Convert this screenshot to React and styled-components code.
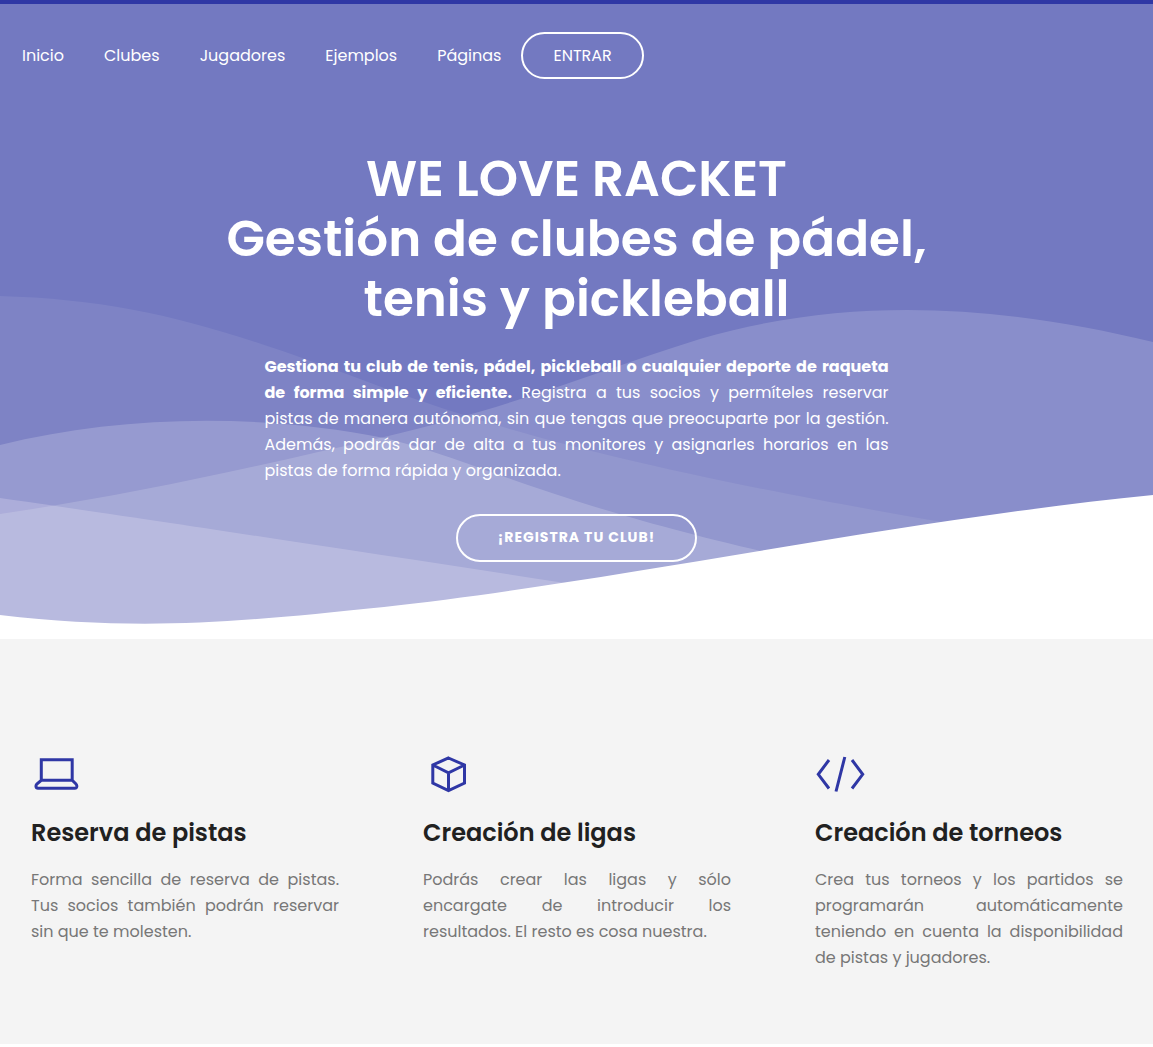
import React from "react";
import styled, { createGlobalStyle } from "styled-components";

const GlobalStyle = createGlobalStyle`
  *, *::before, *::after { box-sizing: border-box; }
  body {
    margin: 0;
    background: #ffffff;
    color: #777777;
    font-family: Poppins, Inter, "Open Sans", sans-serif;
    font-size: 16px;
    line-height: 26px;
  }
  h1, h2, p, ul { margin: 0; padding: 0; }
`;

const Hero = styled.header`
  position: relative;
  border-top: 4px solid #2f37a5;
  background: #7379c1;
  color: #ffffff;
  padding: 28px 0 77px;
`;

const Waves = styled.svg`
  position: absolute;
  inset: 0;
  width: 100%;
  height: 100%;
  display: block;
`;

const Nav = styled.nav`
  position: relative;
  display: flex;
  align-items: center;
  padding-left: 2px;
`;

const NavList = styled.ul`
  display: flex;
  list-style: none;
`;

const NavLink = styled.a`
  display: block;
  padding: 0 20px;
  color: inherit;
  text-decoration: none;
`;

const OutlineLink = styled.a`
  display: inline-block;
  border: 2px solid #ffffff;
  border-radius: 24px;
  color: #ffffff;
  text-decoration: none;
  text-transform: uppercase;
`;

const LoginLink = styled(OutlineLink)`
  padding: 9px 30px 8px;
`;

const RegisterLink = styled(OutlineLink)`
  margin-top: 30px;
  padding: 8px 40px 10px;
  font-size: 14px;
  font-weight: 700;
  letter-spacing: 1px;
`;

const Intro = styled.div`
  position: relative;
  max-width: 768px;
  margin: 70px auto 0;
  text-align: center;
`;

const Title = styled.h1`
  font-size: 50px;
  line-height: 60px;
  font-weight: 600;
`;

const Lead = styled.p`
  max-width: 624px;
  margin: 25px auto 0;
  text-align: justify;
`;

const Features = styled.main`
  display: grid;
  grid-template-columns: repeat(3, 1fr);
  column-gap: 84px;
  padding: 110px 30px 73px 31px;
  background: #f4f4f4;
`;

const FeatureIcon = styled.svg`
  display: block;
  width: 50px;
  height: 50px;
  fill: none;
  stroke: #2f37a5;
  stroke-width: 3;
`;

const FeatureTitle = styled.h2`
  margin-top: 18px;
  color: #212121;
  font-size: 24px;
  line-height: 32px;
  font-weight: 600;
`;

const FeatureText = styled.p`
  margin-top: 18px;
  text-align: justify;
`;

const links = ["Inicio", "Clubes", "Jugadores", "Ejemplos", "Páginas"];

const features = [
  {
    title: "Reserva de pistas",
    text: "Forma sencilla de reserva de pistas. Tus socios también podrán reservar sin que te molesten.",
    icon: (
      <path d="M10.300 31.300V10.800H41.200V31.300M10.300 31.300H41.200L45 35Q46 36 45.800 37.500Q45.500 39.200 43.800 39.200H7Q5.200 39.200 5 37.500Q4.800 36 5.800 35Z" />
    ),
  },
  {
    title: "Creación de ligas",
    text: "Podrás crear las ligas y sólo encargate de introducir los resultados. El resto es cosa nuestra.",
    icon: <path d="M25.500 9L41.500 16V34L25.500 41.500L9.800 34V16ZM9.800 16L25.500 23.800L41.500 16M25.500 23.800V41.500" />,
  },
  {
    title: "Creación de torneos",
    text: "Crea tus torneos y los partidos se programarán automáticamente teniendo en cuenta la disponibilidad de pistas y jugadores.",
    icon: <path d="M14 11L3.300 25.300L14 39.500M37 11L47.700 25.300L37 39.500M29.800 8L21 42.500" />,
  },
];

export default function App() {
  return (
    <>
      <GlobalStyle />
      <Hero>
        <Waves viewBox="0 4 1153 635" preserveAspectRatio="none" aria-hidden="true">
          <g fill="#ffffff">
            <path
              fillOpacity="0.08"
              d="M0 296C140 300 230 330 384 388C500 430 640 470 942 522V639H0Z"
            />
            <path
              fillOpacity="0.16"
              d="M0 514C130 495 250 468 384 437C520 405 600 370 700 339C850 295 1000 305 1153 342V639H0Z"
            />
            <path
              fillOpacity="0.19"
              d="M0 445C120 415 260 413 384 438C470 458 540 500 765 552V639H0Z"
            />
            <path
              fill="#fff4ff"
              fillOpacity="0.21"
              d="M0 498C100 512 350 550 565 583V639H0Z"
            />
            <path d="M0 615C140 631 230 623 384 607C600 584 900 520 1153 495V639H0Z" />
          </g>
        </Waves>
        <Nav aria-label="Principal">
          <NavList>
            {links.map((label) => (
              <li key={label}>
                <NavLink href="#">{label}</NavLink>
              </li>
            ))}
          </NavList>
          <LoginLink href="#">Entrar</LoginLink>
        </Nav>
        <Intro>
          <Title>
            WE LOVE RACKET
            <br />
            Gestión de clubes de pádel, tenis y pickleball
          </Title>
          <Lead>
            <strong>
              Gestiona tu club de tenis, pádel, pickleball o cualquier deporte de raqueta de forma
              simple y eficiente.
            </strong>{" "}
            Registra a tus socios y permíteles reservar pistas{"\u00a0"}de manera autónoma, sin que
            tengas que preocuparte por la gestión. Además, podrás dar de alta a tus monitores y
            asignarles horarios en las pistas de forma rápida y organizada.
          </Lead>
          <RegisterLink href="#">¡Registra tu club!</RegisterLink>
        </Intro>
      </Hero>
      <Features>
        {features.map(({ title, text, icon }) => (
          <section key={title}>
            <FeatureIcon viewBox="0 0 50 50" aria-hidden="true">
              {icon}
            </FeatureIcon>
            <FeatureTitle>{title}</FeatureTitle>
            <FeatureText>{text}</FeatureText>
          </section>
        ))}
      </Features>
    </>
  );
}
